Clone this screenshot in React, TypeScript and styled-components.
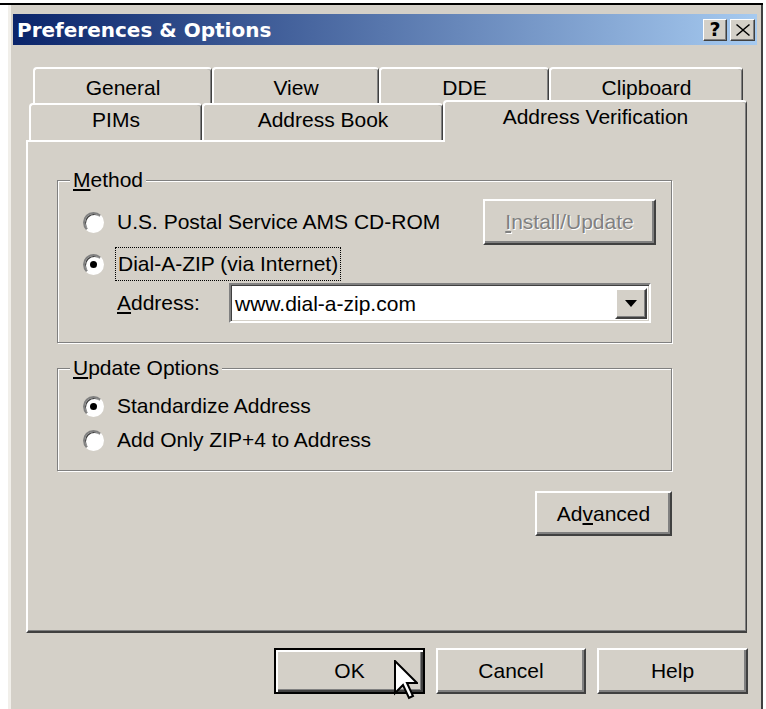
import styled, { createGlobalStyle } from "styled-components";

const GlobalStyle = createGlobalStyle`
  html, body {
    margin: 0;
    padding: 0;
    background: #fff;
    overflow: hidden;
  }
  body {
    font-family: "Liberation Sans", Arial, sans-serif;
    font-size: 21px;
    color: #000;
  }
`;

const Screen = styled.div`
  padding-top: 3px;
  height: 709px;
  box-sizing: border-box;
`;

const TopRule = styled.div`
  width: 763px;
  height: 2px;
  background: #000;
`;

const Window = styled.div`
  margin-left: 8px;
  width: 755px;
  height: 720px;
  box-sizing: border-box;
  background: #d4d0c8;
  border-left: 3px solid #f1efea;
  border-right: 2px solid #404040;
  padding: 9px 4px 0 2px;
`;

const TitleBar = styled.div`
  height: 31px;
  display: flex;
  align-items: center;
  gap: 3px;
  padding: 0 2px 0 4px;
  background: linear-gradient(90deg, #0a246a 0%, #a6caf0 100%);
`;

const Title = styled.div`
  flex: 1;
  font-family: "DejaVu Sans", Verdana, sans-serif;
  font-weight: bold;
  font-size: 20px;
  color: #fff;
`;

const CaptionButton = styled.div<{ $w: number }>`
  width: ${(p) => p.$w}px;
  height: 22px;
  box-sizing: border-box;
  background: #d4d0c8;
  border: 1px solid;
  border-color: #fff #404040 #404040 #fff;
  box-shadow: inset -1px -1px #808080;
  display: flex;
  align-items: center;
  justify-content: center;
  font-family: "DejaVu Sans", sans-serif;
  font-weight: bold;
  font-size: 19px;
  line-height: 1;
`;

const TabControl = styled.div`
  margin: 22px 0 0 13px;
  width: 721px;
`;

const TabRow = styled.div<{ $h: number; $indent: number }>`
  display: flex;
  height: ${(p) => p.$h}px;
  padding-left: ${(p) => p.$indent}px;
`;

const Tab = styled.div<{ $w: number; $active?: boolean }>`
  flex: none;
  width: ${(p) => p.$w}px;
  box-sizing: border-box;
  background: #d4d0c8;
  border-top: 2px solid #fff;
  border-left: 2px solid #fff;
  border-right: 1px solid #404040;
  border-radius: 4px 4px 0 0;
  box-shadow: inset -1px 0 #808080;
  text-align: center;
  line-height: 24px;
  white-space: nowrap;
  ${(p) =>
    p.$active &&
    `
    margin-top: -3px;
    margin-bottom: -2px;
    z-index: 1;
  `}
`;

const BackTab = styled(Tab)`
  padding-top: 7px;
`;

const FrontTab = styled(Tab)`
  padding-top: 3px;
`;

const Panel = styled.div`
  box-sizing: border-box;
  height: 493px;
  border-top: 2px solid #fff;
  border-left: 2px solid #fff;
  border-right: 1px solid #404040;
  border-bottom: 2px solid #404040;
  box-shadow: inset -1px -1px #808080;
  padding-top: 26px;
`;

const Group = styled.fieldset`
  margin: 0 0 0 29px;
  min-width: 0;
  width: 615px;
  box-sizing: border-box;
  border: 1px solid #808080;
  box-shadow: inset 1px 1px #fff, 1px 1px #fff;
  padding: 0;
  & + & {
    margin-top: 13px;
  }
`;

const Legend = styled.legend`
  margin-left: 12px;
  padding: 0 3px;
  line-height: 24px;
  background: #d4d0c8;
`;

const GroupBody = styled.div<{ $pad: string }>`
  padding: ${(p) => p.$pad};
`;

const OptionRow = styled.div<{ $h: number; $gap?: number }>`
  display: flex;
  align-items: center;
  height: ${(p) => p.$h}px;
  margin-top: ${(p) => p.$gap ?? 0}px;
`;

const SplitRow = styled(OptionRow)`
  justify-content: space-between;
`;

const RadioGroup = styled.div`
  display: flex;
  align-items: center;
`;

const Radio = styled.span<{ $checked?: boolean }>`
  flex: none;
  width: 21px;
  height: 21px;
  box-sizing: border-box;
  border-radius: 50%;
  border: 2px solid;
  border-color: #808080 #fff #fff #808080;
  background: #fff;
  box-shadow: inset 1px 1px #404040;
  display: flex;
  align-items: center;
  justify-content: center;
  &::after {
    content: "";
    width: 7px;
    height: 7px;
    border-radius: 50%;
    background: ${(p) => (p.$checked ? "#000" : "transparent")};
  }
`;

const OptionText = styled.span`
  margin-left: 13px;
  line-height: 24px;
  white-space: nowrap;
`;

const FocusText = styled.span`
  margin-left: 11px;
  padding: 4px 2px;
  border: 1px dotted #000;
  line-height: 24px;
  white-space: nowrap;
`;

const FieldLabel = styled.span`
  width: 112px;
  margin-left: 34px;
`;

const Combo = styled.div`
  width: 422px;
  height: 40px;
  box-sizing: border-box;
  display: flex;
  align-items: stretch;
  background: #fff;
  border: 2px solid;
  border-color: #808080 #fff #fff #808080;
  box-shadow: inset 1px 1px #404040, inset -1px -1px #d4d0c8;
  padding: 3px 2px 2px 3px;
`;

const ComboText = styled.span`
  flex: 1;
  padding-left: 1px;
  line-height: 31px;
`;

const DropButton = styled.div`
  width: 32px;
  box-sizing: border-box;
  background: #d4d0c8;
  border: 2px solid;
  border-color: #fff #404040 #404040 #fff;
  box-shadow: inset -1px -1px #808080;
  display: flex;
  align-items: center;
  justify-content: center;
`;

const Button = styled.button<{ $w: number; $h?: number; $default?: boolean }>`
  position: relative;
  width: ${(p) => p.$w}px;
  height: ${(p) => p.$h ?? 46}px;
  box-sizing: border-box;
  padding: 0;
  font: inherit;
  color: #000;
  background: #d4d0c8;
  border: 2px solid;
  border-color: #fff #404040 #404040 #fff;
  box-shadow: inset -2px -2px #808080;
  ${(p) =>
    p.$default &&
    `
    border-color: #000;
    box-shadow: inset 2px 2px #fff, inset -2px -2px #404040, inset -3px -3px #808080;
  `}
  &:disabled {
    color: #808080;
    text-shadow: 1px 1px #fff;
  }
`;

const ActionRow = styled.div`
  width: 615px;
  margin: 20px 0 0 29px;
  display: flex;
  justify-content: flex-end;
`;

const Footer = styled.div`
  display: flex;
  justify-content: flex-end;
  gap: 11px;
  margin: 15px 9px 0 0;
`;

const Pointer = styled.svg`
  position: absolute;
  left: 118px;
  top: 10px;
`;

function CloseGlyph() {
  return (
    <svg width="14" height="12" viewBox="0 0 14 12">
      <path d="M1 0 L7 5 L13 0 L14 1 L8 6 L14 11 L13 12 L7 7 L1 12 L0 11 L6 6 L0 1 Z" fill="#000" />
    </svg>
  );
}

function DownArrow() {
  return (
    <svg width="12" height="7" viewBox="0 0 12 7">
      <path d="M0 0 H12 L6 7 Z" fill="#000" />
    </svg>
  );
}

export default function App() {
  return (
    <Screen>
      <GlobalStyle />
      <TopRule />
      <Window>
        <TitleBar>
          <Title>Preferences &amp; Options</Title>
          <CaptionButton $w={24}>?</CaptionButton>
          <CaptionButton $w={25}>
            <CloseGlyph />
          </CaptionButton>
        </TitleBar>

        <TabControl>
          <TabRow $h={36} $indent={7}>
            <BackTab $w={179}>General</BackTab>
            <BackTab $w={167}>View</BackTab>
            <BackTab $w={170}>DDE</BackTab>
            <BackTab $w={194}>Clipboard</BackTab>
          </TabRow>
          <TabRow $h={37} $indent={3}>
            <FrontTab $w={173}>PIMs</FrontTab>
            <FrontTab $w={241}>Address Book</FrontTab>
            <FrontTab $w={304} $active>
              Address Verification
            </FrontTab>
          </TabRow>

          <Panel>
            <Group>
              <Legend>
                <u>M</u>ethod
              </Legend>
              <GroupBody $pad="7px 15px 19px 25px">
                <SplitRow $h={46}>
                  <RadioGroup>
                    <Radio />
                    <OptionText>U.S. Postal Service AMS CD-ROM</OptionText>
                  </RadioGroup>
                  <Button $w={173} disabled>
                    <u>I</u>nstall/Update
                  </Button>
                </SplitRow>
                <OptionRow $h={34} $gap={2}>
                  <Radio $checked />
                  <FocusText>Dial-A-ZIP (via Internet)</FocusText>
                </OptionRow>
                <OptionRow $h={40} $gap={2}>
                  <FieldLabel>
                    <u>A</u>ddress:
                  </FieldLabel>
                  <Combo>
                    <ComboText>www.dial-a-zip.com</ComboText>
                    <DropButton>
                      <DownArrow />
                    </DropButton>
                  </Combo>
                </OptionRow>
              </GroupBody>
            </Group>

            <Group>
              <Legend>
                <u>U</u>pdate Options
              </Legend>
              <GroupBody $pad="9px 15px 13px 25px">
                <OptionRow $h={34}>
                  <Radio $checked />
                  <OptionText>Standardize Address</OptionText>
                </OptionRow>
                <OptionRow $h={34}>
                  <Radio />
                  <OptionText>Add Only ZIP+4 to Address</OptionText>
                </OptionRow>
              </GroupBody>
            </Group>

            <ActionRow>
              <Button $w={137} $h={45}>
                Ad<u>v</u>anced
              </Button>
            </ActionRow>
          </Panel>
        </TabControl>

        <Footer>
          <Button $w={151} $default>
            OK
            <Pointer width="24" height="40" viewBox="0 0 12 20">
              <path
                d="M0.5 0.5 V16.5 L4.5 12.5 L7.5 19 L9.5 18 L6.5 11.5 H11.5 Z"
                fill="#fff"
                stroke="#000"
                strokeWidth="1"
                strokeLinejoin="miter"
              />
            </Pointer>
          </Button>
          <Button $w={150}>Cancel</Button>
          <Button $w={151}>Help</Button>
        </Footer>
      </Window>
    </Screen>
  );
}
